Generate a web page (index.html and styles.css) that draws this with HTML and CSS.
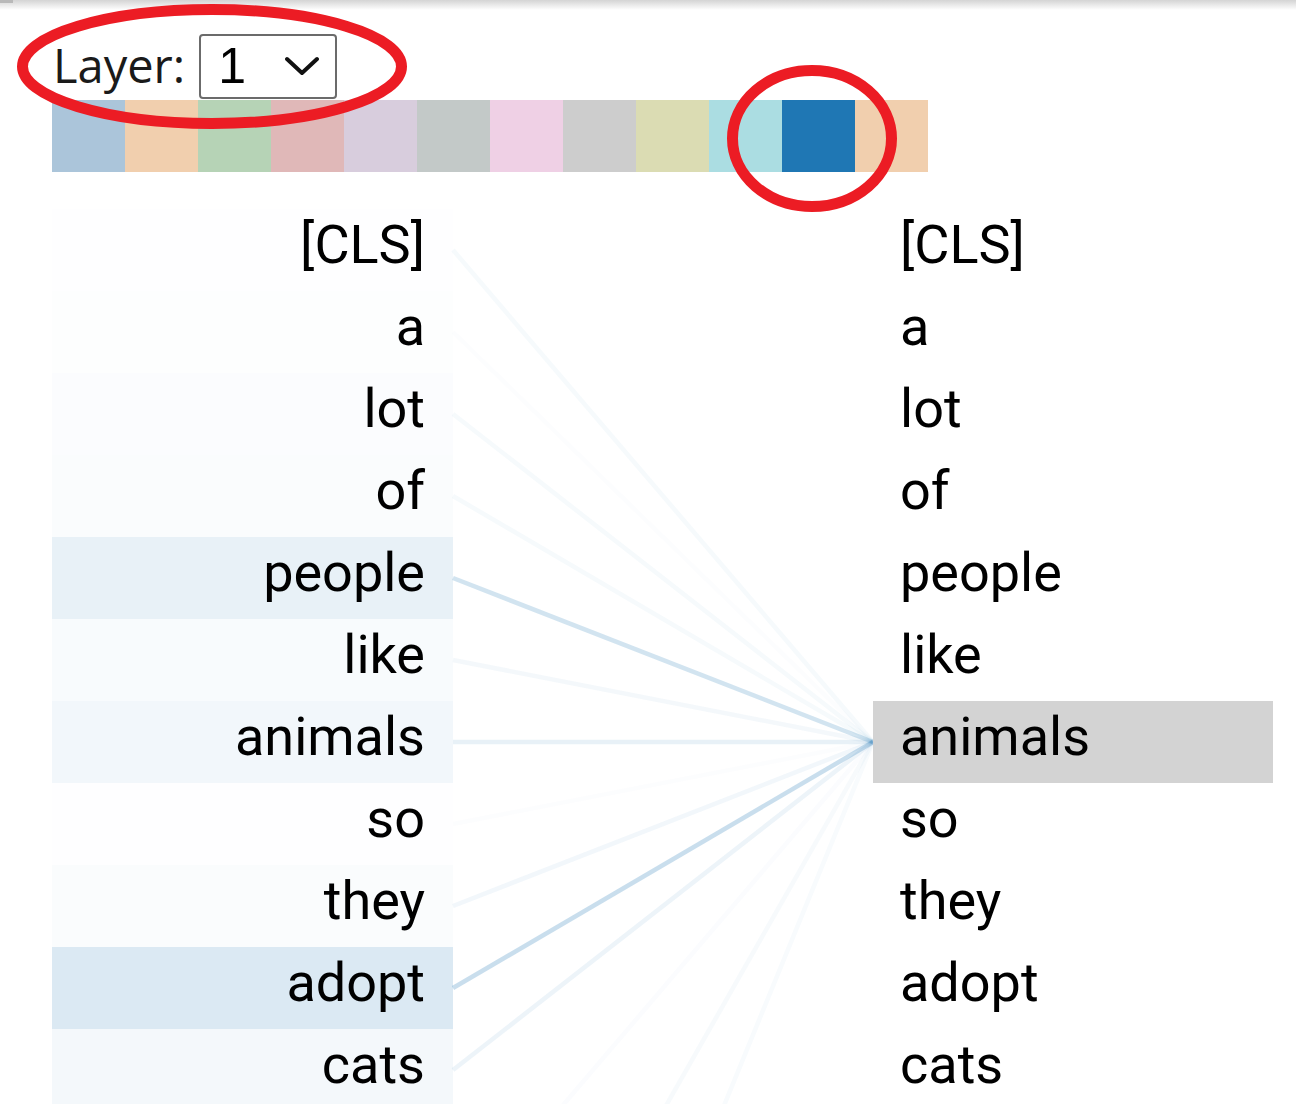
FILE: index.html
```html
<!DOCTYPE html>
<html>
<head>
<meta charset="utf-8">
<link rel="stylesheet" href="styles.css">
</head>
<body>
<div class="topbar"><div class="nub"></div></div>
<div class="viz">
  <div class="controls">
    <span class="label">Layer:</span>
    <div class="select">
      <span class="value">1</span>
      <svg class="chev" width="34" height="20" viewBox="0 0 34 20"><path d="M2 3 L17 17 L32 3" fill="none" stroke="#111" stroke-width="4" stroke-linecap="round" stroke-linejoin="round"/></svg>
    </div>
  </div>
  <div class="heads">
    <div class="head h0"></div><div class="head h1"></div><div class="head h2"></div><div class="head h3"></div>
    <div class="head h4"></div><div class="head h5"></div><div class="head h6"></div><div class="head h7"></div>
    <div class="head h8"></div><div class="head h9"></div><div class="head h10"></div><div class="head h11"></div>
  </div>
  <div class="attn">
    <div class="col left">
      <div class="tok" style="background: rgba(31,119,180,0.005)">[CLS]</div>
      <div class="tok" style="background: rgba(31,119,180,0.006)">a</div>
      <div class="tok" style="background: rgba(31,119,180,0.02)">lot</div>
      <div class="tok" style="background: rgba(31,119,180,0.024)">of</div>
      <div class="tok" style="background: rgba(31,119,180,0.1)">people</div>
      <div class="tok" style="background: rgba(31,119,180,0.03)">like</div>
      <div class="tok" style="background: rgba(31,119,180,0.06)">animals</div>
      <div class="tok" style="background: rgba(31,119,180,0.004)">so</div>
      <div class="tok" style="background: rgba(31,119,180,0.025)">they</div>
      <div class="tok" style="background: rgba(31,119,180,0.16)">adopt</div>
      <div class="tok" style="background: rgba(31,119,180,0.05)">cats</div>
    </div>
    <svg class="lines" width="420" height="902" viewBox="0 0 420 902">
      <g stroke="#1f77b4" stroke-width="4.5" fill="none">
        <line x1="0" y1="41" x2="420" y2="533" stroke-opacity="0.04"/>
        <line x1="0" y1="123" x2="420" y2="533" stroke-opacity="0.01"/>
        <line x1="0" y1="205" x2="420" y2="533" stroke-opacity="0.04"/>
        <line x1="0" y1="287" x2="420" y2="533" stroke-opacity="0.04"/>
        <line x1="0" y1="369" x2="420" y2="533" stroke-opacity="0.2"/>
        <line x1="0" y1="451" x2="420" y2="533" stroke-opacity="0.05"/>
        <line x1="0" y1="533" x2="420" y2="533" stroke-opacity="0.1"/>
        <line x1="0" y1="615" x2="420" y2="533" stroke-opacity="0.01"/>
        <line x1="0" y1="697" x2="420" y2="533" stroke-opacity="0.06"/>
        <line x1="0" y1="779" x2="420" y2="533" stroke-opacity="0.24"/>
        <line x1="0" y1="861" x2="420" y2="533" stroke-opacity="0.08"/>
        <line x1="0" y1="1025" x2="420" y2="533" stroke-opacity="0.02"/>
        <line x1="0" y1="1271" x2="420" y2="533" stroke-opacity="0.035"/>
        <line x1="0" y1="1558" x2="420" y2="533" stroke-opacity="0.03"/>
      </g>
    </svg>
    <div class="col right">
      <div class="tok">[CLS]</div>
      <div class="tok">a</div>
      <div class="tok">lot</div>
      <div class="tok">of</div>
      <div class="tok">people</div>
      <div class="tok">like</div>
      <div class="tok sel">animals</div>
      <div class="tok">so</div>
      <div class="tok">they</div>
      <div class="tok">adopt</div>
      <div class="tok">cats</div>
    </div>
  </div>
</div>
<svg class="annot" width="1296" height="1104" viewBox="0 0 1296 1104">
  <ellipse cx="212" cy="66.5" rx="189.5" ry="57" fill="none" stroke="#ec1c24" stroke-width="11"/>
  <ellipse cx="812" cy="138.5" rx="79.5" ry="68" fill="none" stroke="#ec1c24" stroke-width="11"/>
</svg>
</body>
</html>
```
FILE: styles.css
```css
html, body {
  margin: 0;
  padding: 0;
  overflow: hidden;
  background: #fff;
}
body {
  width: 1296px;
  height: 1104px;
  position: relative;
  font-family: Roboto, "Liberation Sans", sans-serif;
  color: #000;
}
.topbar {
  height: 10px;
  background: linear-gradient(#d4d4d4, #ffffff);
}
.nub {
  width: 13px;
  height: 3px;
  background: #b9b9b9;
}
.viz {
  padding-left: 52px;
}
.controls {
  display: flex;
  align-items: baseline;
  gap: 14px;
  margin-top: 23px;
}
.label {
  font-family: "Open Sans", "Noto Sans", sans-serif;
  font-size: 47px;
  color: #1a1a1a;
  margin-left: 1px;
}
.select {
  width: 138px;
  height: 65px;
  box-sizing: border-box;
  border: 2px solid #6b6b6b;
  border-radius: 4px;
  display: flex;
  align-items: center;
  justify-content: space-between;
  padding: 0 16px 0 17px;
  font-family: "Liberation Sans", Arial, sans-serif;
  font-size: 50px;
  background: #fff;
}
.chev {
  display: block;
}
.heads {
  display: flex;
  margin-top: 1px;
}
.head {
  width: 73px;
  height: 72px;
}
.h0 { background: #abc5da; }
.h1 { background: #f1cfae; }
.h2 { background: #b6d3b6; }
.h3 { background: #e0b8b8; }
.h4 { background: #d8cddd; }
.h5 { background: #c3c9c8; }
.h6 { background: #efd0e5; }
.h7 { background: #cdcdcd; }
.h8 { background: #dbdcb3; }
.h9 { background: #abdde2; }
.h10 { background: #1f77b4; }
.h11 { background: #f1cfae; }
.attn {
  display: grid;
  grid-template-columns: 401px 420px 400px;
  margin-top: 37px;
}
.lines {
  display: block;
  overflow: visible;
}
.tok {
  height: 72px;
  line-height: 72px;
  padding-bottom: 10px;
  font-size: 54px;
  white-space: nowrap;
}
.left .tok {
  text-align: right;
  padding-right: 28px;
}
.right .tok {
  padding-left: 27px;
}
.right .tok.sel {
  background: #d3d3d3;
}
.annot {
  position: absolute;
  left: 0;
  top: 0;
  pointer-events: none;
}
```
